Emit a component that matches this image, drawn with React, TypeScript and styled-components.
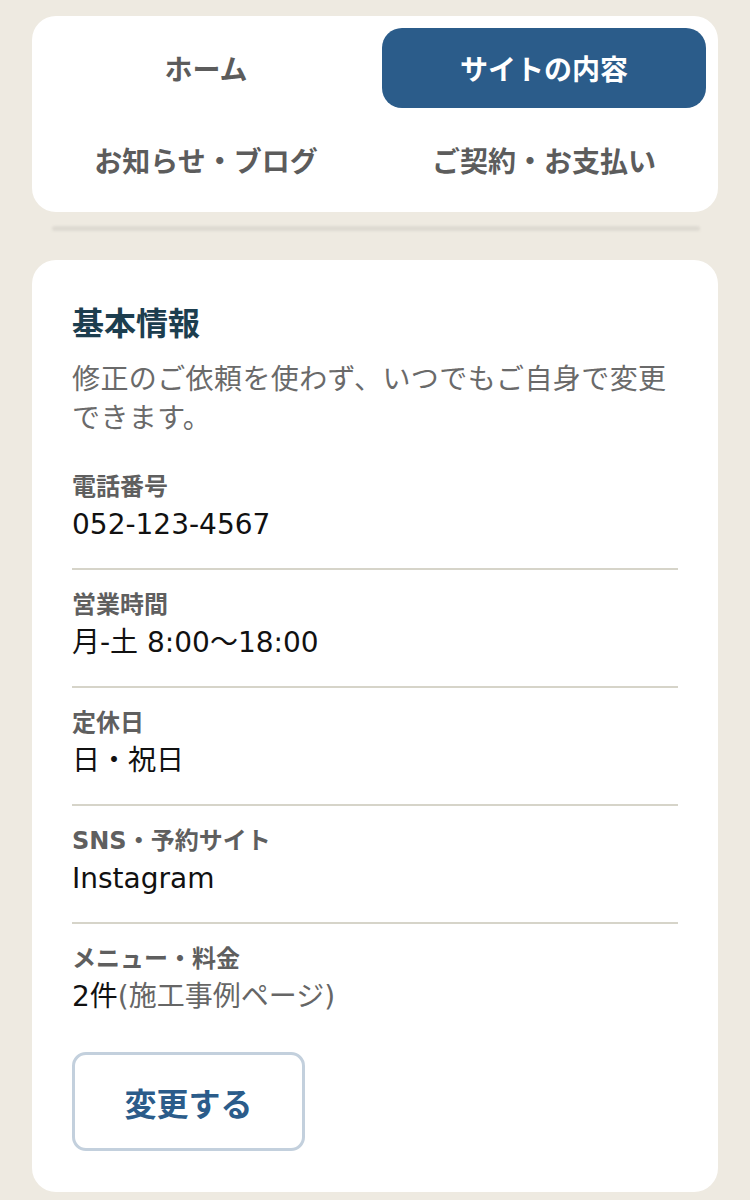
import React from 'react'
import styled, { createGlobalStyle } from 'styled-components'

const GlobalStyle = createGlobalStyle`
  html, body {
    margin: 0;
    padding: 0;
    background: #eeeae1;
  }
  body {
    font-family: 'DejaVu Sans', 'Noto Sans CJK JP', sans-serif;
    -webkit-font-smoothing: antialiased;
  }
`

const Page = styled.div`
  padding: 16px 32px 8px;
  display: flex;
  flex-direction: column;
`

const NavCard = styled.nav`
  background: #fff;
  border-radius: 24px;
  padding: 12px;
  display: grid;
  grid-template-columns: 1fr 1fr;
  grid-auto-rows: 80px;
  column-gap: 14px;
  row-gap: 12px;
`

const NavItem = styled.a<{ $active?: boolean }>`
  display: flex;
  align-items: center;
  justify-content: center;
  border-radius: 20px;
  font-size: 28px;
  font-weight: 700;
  text-decoration: none;
  color: ${({ $active }) => ($active ? '#fff' : '#5c5c5c')};
  background: ${({ $active }) => ($active ? '#2b5c8a' : 'transparent')};
`

const HeaderShadow = styled.div`
  margin: 14px 18px 0 20px;
  height: 5px;
  border-radius: 3px;
  background: #dedad2;
  filter: blur(1px);
`

const Card = styled.section`
  margin-top: 29px;
  background: #fff;
  border-radius: 24px;
  padding: 40px 40px 41px;
  display: flex;
  flex-direction: column;
`

const Title = styled.h2`
  margin: 0;
  font-size: 32px;
  line-height: 48px;
  font-weight: 700;
  color: #1d3e4f;
`

const Lead = styled.p`
  margin: 12px 0 14px;
  font-size: 28px;
  line-height: 39px;
  letter-spacing: 0.4px;
  color: #6a6a6a;
`

const List = styled.dl`
  margin: 0;
  display: flex;
  flex-direction: column;
`

const Item = styled.div<{ $last?: boolean }>`
  padding: 17px 0 ${({ $last }) => ($last ? '0' : '24px')};
  border-bottom: ${({ $last }) => ($last ? 'none' : '2px solid #d6d4c9')};
`

const Label = styled.dt`
  font-size: 24px;
  line-height: 36px;
  font-weight: 700;
  color: #5f5f5f;
`

const Value = styled.dd`
  margin: 0;
  font-size: 28px;
  line-height: 39px;
  color: #111;
`

const Note = styled.span`
  color: #666;
`

const EditButton = styled.button`
  margin-top: 36px;
  width: 233px;
  height: 99px;
  box-sizing: border-box;
  border: 3px solid #c3d0dd;
  border-radius: 14px;
  background: #fff;
  font-family: inherit;
  font-size: 32px;
  font-weight: 700;
  color: #2b5c8a;
  cursor: pointer;
`

const navItems = [
  { label: 'ホーム' },
  { label: 'サイトの内容', active: true },
  { label: 'お知らせ・ブログ' },
  { label: 'ご契約・お支払い' },
]

const info: { label: string; value: React.ReactNode }[] = [
  { label: '電話番号', value: '052-123-4567' },
  { label: '営業時間', value: '月-土 8:00〜18:00' },
  { label: '定休日', value: '日・祝日' },
  { label: 'SNS・予約サイト', value: 'Instagram' },
  {
    label: 'メニュー・料金',
    value: (
      <>
        2件<Note>(施工事例ページ)</Note>
      </>
    ),
  },
]

export default function App() {
  return (
    <>
      <GlobalStyle />
      <Page>
        <NavCard>
          {navItems.map((n) => (
            <NavItem key={n.label} $active={n.active}>
              {n.label}
            </NavItem>
          ))}
        </NavCard>
        <HeaderShadow />
        <Card>
          <Title>基本情報</Title>
          <Lead>修正のご依頼を使わず、いつでもご自身で変更できます。</Lead>
          <List>
            {info.map((row, i) => (
              <Item key={row.label} $last={i === info.length - 1}>
                <Label>{row.label}</Label>
                <Value>{row.value}</Value>
              </Item>
            ))}
          </List>
          <div>
            <EditButton>変更する</EditButton>
          </div>
        </Card>
      </Page>
    </>
  )
}
